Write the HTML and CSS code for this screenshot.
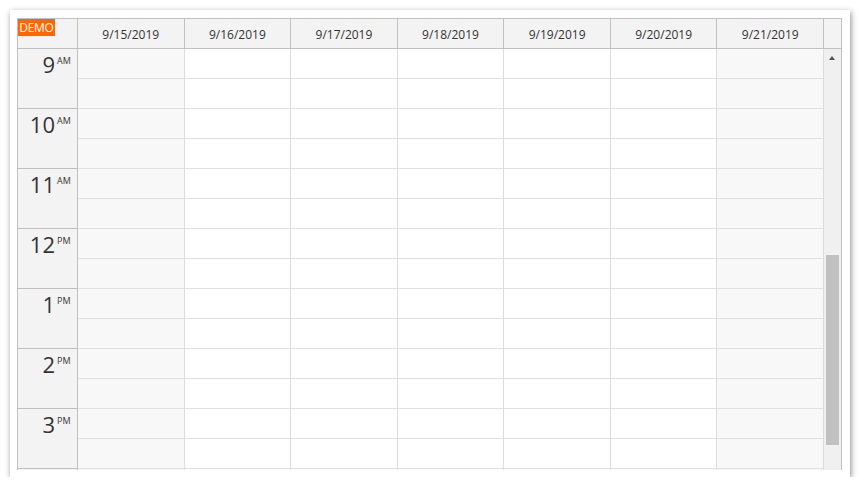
FILE: index.html
```html
<!DOCTYPE html>
<html>
<head>
<meta charset="utf-8">
<link rel="stylesheet" href="styles.css">
</head>
<body>
<div class="frame">
  <div class="cal">
    <div class="head">
      <div class="corner"><span class="demo">DEMO</span></div>
      <div class="colhead">9/15/2019</div>
      <div class="colhead">9/16/2019</div>
      <div class="colhead">9/17/2019</div>
      <div class="colhead">9/18/2019</div>
      <div class="colhead">9/19/2019</div>
      <div class="colhead">9/20/2019</div>
      <div class="colhead">9/21/2019</div>
      <div class="sbhead"></div>
    </div>
    <div class="body">
      <div class="rowheads">
        <div class="hour"><span class="num">9</span><span class="ampm">AM</span></div>
        <div class="hour"><span class="num">10</span><span class="ampm">AM</span></div>
        <div class="hour"><span class="num">11</span><span class="ampm">AM</span></div>
        <div class="hour"><span class="num">12</span><span class="ampm">PM</span></div>
        <div class="hour"><span class="num">1</span><span class="ampm">PM</span></div>
        <div class="hour"><span class="num">2</span><span class="ampm">PM</span></div>
        <div class="hour"><span class="num">3</span><span class="ampm">PM</span></div>
        <div class="hour"></div>
      </div>
      <div class="grid">
        <div class="day weekend"><div class="cell"></div><div class="cell"></div><div class="cell"></div><div class="cell"></div><div class="cell"></div><div class="cell"></div><div class="cell"></div><div class="cell"></div><div class="cell"></div><div class="cell"></div><div class="cell"></div><div class="cell"></div><div class="cell"></div><div class="cell"></div><div class="cell"></div></div>
        <div class="day"><div class="cell"></div><div class="cell"></div><div class="cell"></div><div class="cell"></div><div class="cell"></div><div class="cell"></div><div class="cell"></div><div class="cell"></div><div class="cell"></div><div class="cell"></div><div class="cell"></div><div class="cell"></div><div class="cell"></div><div class="cell"></div><div class="cell"></div></div>
        <div class="day"><div class="cell"></div><div class="cell"></div><div class="cell"></div><div class="cell"></div><div class="cell"></div><div class="cell"></div><div class="cell"></div><div class="cell"></div><div class="cell"></div><div class="cell"></div><div class="cell"></div><div class="cell"></div><div class="cell"></div><div class="cell"></div><div class="cell"></div></div>
        <div class="day"><div class="cell"></div><div class="cell"></div><div class="cell"></div><div class="cell"></div><div class="cell"></div><div class="cell"></div><div class="cell"></div><div class="cell"></div><div class="cell"></div><div class="cell"></div><div class="cell"></div><div class="cell"></div><div class="cell"></div><div class="cell"></div><div class="cell"></div></div>
        <div class="day"><div class="cell"></div><div class="cell"></div><div class="cell"></div><div class="cell"></div><div class="cell"></div><div class="cell"></div><div class="cell"></div><div class="cell"></div><div class="cell"></div><div class="cell"></div><div class="cell"></div><div class="cell"></div><div class="cell"></div><div class="cell"></div><div class="cell"></div></div>
        <div class="day"><div class="cell"></div><div class="cell"></div><div class="cell"></div><div class="cell"></div><div class="cell"></div><div class="cell"></div><div class="cell"></div><div class="cell"></div><div class="cell"></div><div class="cell"></div><div class="cell"></div><div class="cell"></div><div class="cell"></div><div class="cell"></div><div class="cell"></div></div>
        <div class="day weekend"><div class="cell"></div><div class="cell"></div><div class="cell"></div><div class="cell"></div><div class="cell"></div><div class="cell"></div><div class="cell"></div><div class="cell"></div><div class="cell"></div><div class="cell"></div><div class="cell"></div><div class="cell"></div><div class="cell"></div><div class="cell"></div><div class="cell"></div></div>
      </div>
      <div class="scrollbar">
        <div class="arrow"></div>
        <div class="thumb"></div>
      </div>
    </div>
  </div>
</div>
</body>
</html>
```
FILE: styles.css
```css
html, body {
  margin: 0;
  padding: 0;
  background: #ffffff;
}
body {
  font-family: "Open Sans", "Liberation Sans", sans-serif;
  color: #333333;
}
.frame {
  margin: 10px 0 0 10px;
  width: 825px;
  height: 459px;
  padding: 8px 8px 0 7px;
  background: #ffffff;
  box-shadow: 1px 2px 6px rgba(0, 0, 0, 0.45);
}
.cal {
  width: 823px;
  border: 1px solid #c0c0c0;
  border-bottom: none;
}
.head {
  display: flex;
  height: 29px;
  background: #f3f3f3;
  border-bottom: 1px solid #c0c0c0;
}
.corner {
  width: 59px;
  border-right: 1px solid #c0c0c0;
  flex: none;
}
.demo {
  display: block;
  background: #ff6600;
  color: #ffffff;
  font-size: 12px;
  line-height: 17px;
  height: 17px;
  width: 37px;
  text-align: center;
  letter-spacing: -0.3px;
  overflow: hidden;
}
.colhead {
  flex: 1;
  border-right: 1px solid #c0c0c0;
  font-size: 12px;
  display: flex;
  align-items: center;
  justify-content: center;
  padding-top: 2px;
}
.sbhead {
  width: 17px;
  flex: none;
}
.body {
  display: flex;
  height: 421px;
  overflow: hidden;
}
.rowheads {
  width: 59px;
  flex: none;
  background: #f3f3f3;
  border-right: 1px solid #c0c0c0;
}
.hour {
  height: 59px;
  border-bottom: 1px solid #c0c0c0;
  display: flex;
  justify-content: flex-end;
  align-items: flex-start;
  padding-right: 5px;
}
.num {
  font-size: 22px;
  line-height: 30px;
  color: #333333;
}
.ampm {
  font-size: 9px;
  line-height: 12px;
  margin-top: 6px;
  margin-left: 2px;
  width: 15px;
}
.grid {
  flex: 1;
  display: grid;
  grid-template-columns: repeat(7, 1fr);
}
.day {
  background: #ffffff;
  border-right: 1px solid #dcdcdc;
}
.day.weekend {
  background: #f8f8f8;
}
.cell {
  height: 29px;
  border-bottom: 1px solid #e0e0e0;
}
.scrollbar {
  width: 17px;
  flex: none;
  background: #f0f0f0;
  position: relative;
}
.arrow {
  position: absolute;
  left: 5px;
  top: 7px;
  width: 0;
  height: 0;
  border-left: 3.5px solid transparent;
  border-right: 3.5px solid transparent;
  border-bottom: 4px solid #505050;
}
.thumb {
  position: absolute;
  left: 2px;
  top: 206px;
  width: 13px;
  height: 190px;
  background: #c1c1c1;
}
```
